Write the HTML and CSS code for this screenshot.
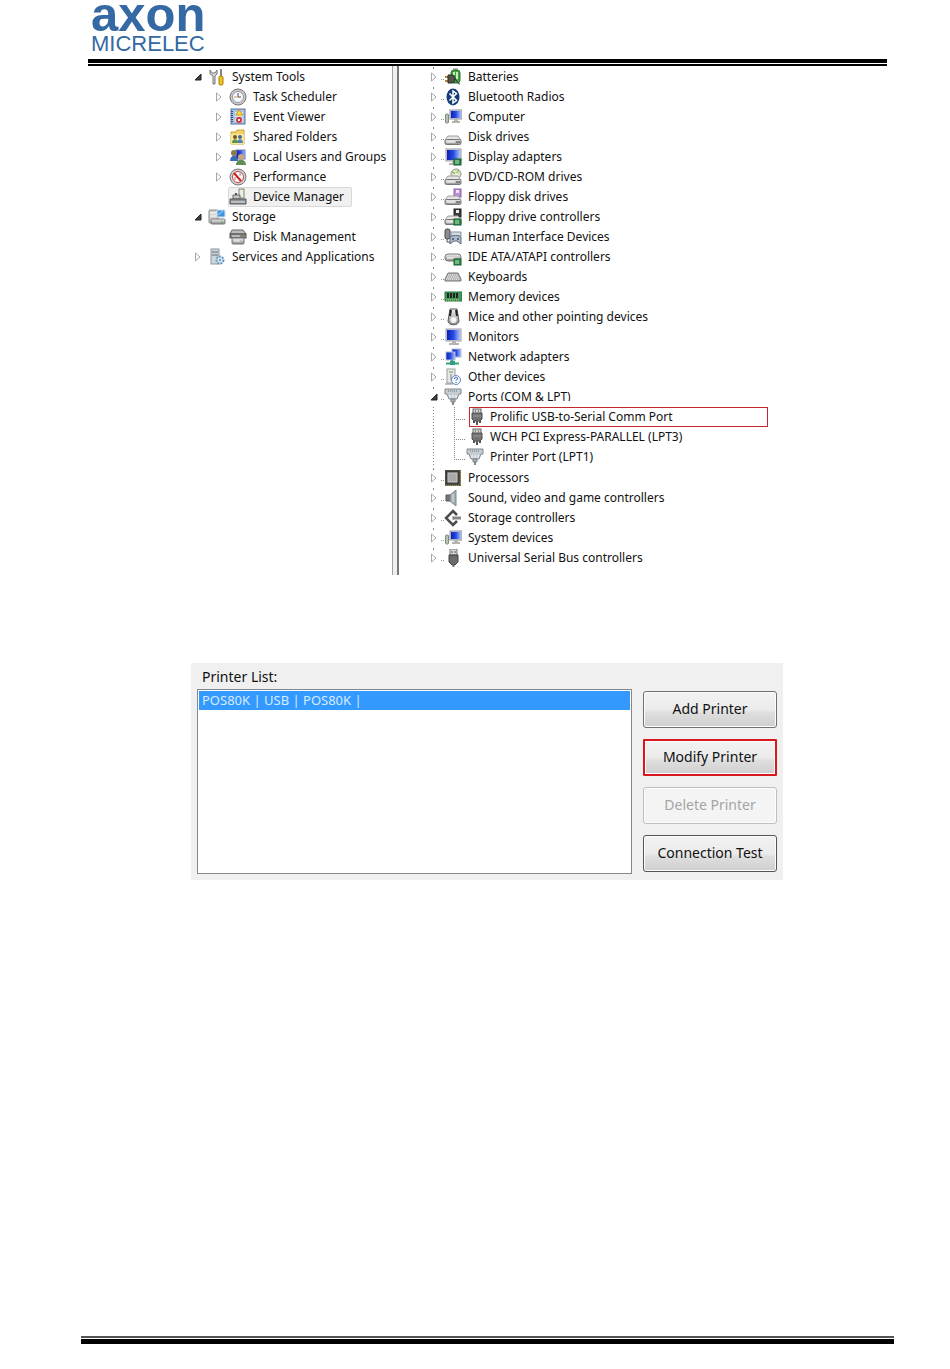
FILE: index.html
```html
<!DOCTYPE html>
<html lang="en">
<head>
    <meta charset="UTF-8">
    <meta name="viewport" content="width=device-width, initial-scale=1.0">
    <title>Axon Micrelec - Printer Setup</title>
    <link rel="stylesheet" href="styles.css">
</head>
<body>

<!-- Icon set -->
<svg class="icon-defs" aria-hidden="true">
    <defs>
        <linearGradient id="metal" x1="0" y1="0" x2="0" y2="1">
            <stop offset="0" stop-color="#f2f2f2"/>
            <stop offset="1" stop-color="#8c8c8c"/>
        </linearGradient>
        <linearGradient id="screen" x1="0" y1="0" x2="1" y2="0">
            <stop offset="0" stop-color="#0a1eb4"/>
            <stop offset="0.5" stop-color="#2a4be0"/>
            <stop offset="1" stop-color="#a9c4ff"/>
        </linearGradient>
    </defs>

    <symbol id="arrow" viewBox="0 0 8 12">
        <path d="M1.5 2v8L6 6z" fill="#fff" stroke="#a6a6a6"/>
    </symbol>
    <symbol id="arrow-open" viewBox="0 0 8 12">
        <path d="M7 3v6H1z" fill="#404040" stroke="#222"/>
    </symbol>

    <symbol id="drive" viewBox="0 0 18 18">
        <path d="M4 8h10l3 4H1z" fill="#e4e4e4" stroke="#a0a0a0"/>
        <rect x="1" y="11.500" width="16" height="5" rx="1.500" fill="url(#metal)" stroke="#777"/>
        <path d="M3 14h8" stroke="#fff"/>
        <path d="M13 13v2M15 13v2" stroke="#444"/>
    </symbol>
    <symbol id="chip-badge" viewBox="0 0 18 18">
        <rect x="10" y="11" width="7" height="6" fill="#2f8a50" stroke="#145c2e"/>
        <path d="M12 12v4M14 12v4" stroke="#b9e0a8"/>
    </symbol>
    <symbol id="monitor" viewBox="0 0 18 18">
        <rect x="2" y="1" width="15" height="12" fill="#dcdce6" stroke="#9a9aaa"/>
        <rect x="3" y="2" width="13" height="10" fill="url(#screen)"/>
        <path d="M8 13h4v2h3v2H5v-2h3z" fill="#b5b5ad"/>
    </symbol>
    <symbol id="computer" viewBox="0 0 18 18">
        <rect x="6" y="2" width="12" height="9" fill="#d5d8e6" stroke="#8c90a8"/>
        <rect x="7" y="3" width="10" height="7" fill="url(#screen)"/>
        <path d="M10 11h4v2h2v2H8v-2h2z" fill="#b5b5ad"/>
        <rect x="1.500" y="6" width="3" height="9" rx="1" fill="#b7c2b4" stroke="#7d8d78"/>
    </symbol>

    <symbol id="tools" viewBox="0 0 18 18">
        <path d="M2 2v4l3 2v8h2V8l2-2V2L7 5H4z" fill="#d5d5d5" stroke="#777"/>
        <path d="M13 1v8" stroke="#888" stroke-width="2"/>
        <rect x="11" y="8" width="4" height="9" rx="1.500" fill="#f2c21d" stroke="#a67c00"/>
    </symbol>
    <symbol id="clock" viewBox="0 0 18 18">
        <circle cx="9" cy="9" r="8" fill="#c9c9c9" stroke="#777"/>
        <circle cx="9" cy="9" r="5.500" fill="#f7fbff" stroke="#99a"/>
        <path d="M9 5v4h3" fill="none" stroke="#456"/>
        <path d="M9 9H5" stroke="#e0a030"/>
    </symbol>
    <symbol id="event" viewBox="0 0 18 18">
        <rect x="2" y="1" width="14" height="15" fill="#a9c2e4" stroke="#5873a0"/>
        <path d="M3 3v12" stroke="#35507f" stroke-width="2" stroke-dasharray="1 1"/>
        <path d="M6 5h8M6 8h8M6 11h8M6 13h8" stroke="#fff"/>
        <path d="M10 2l4 5H7z" fill="#ffe04a" stroke="#d59c00"/>
        <circle cx="10" cy="12" r="3" fill="#d9303c"/>
        <path d="M9 11l2 2M11 11l-2 2" stroke="#fff"/>
    </symbol>
    <symbol id="folder" viewBox="0 0 18 18">
        <path d="M2 4h5l1-2h7v14H2z" fill="#f4d468" stroke="#c9a13a"/>
        <path d="M2 6h13v10H2z" fill="#fae59a"/>
        <circle cx="6" cy="9" r="2" fill="#6d5a20"/>
        <circle cx="11" cy="9" r="2" fill="#456b9c"/>
        <path d="M3 15c0-5 6-5 6 0z" fill="#5d9440"/>
        <path d="M8 15c0-5 6-5 6 0z" fill="#4d83bd"/>
    </symbol>
    <symbol id="users" viewBox="0 0 18 18">
        <rect x="7" y="2" width="9" height="9" fill="url(#screen)" stroke="#7080b0"/>
        <circle cx="5" cy="5" r="3" fill="#8d7a4c"/>
        <path d="M1 13c0-7 8-7 8 0z" fill="#3c69b8"/>
        <circle cx="12" cy="9" r="3" fill="#c9a57b"/>
        <path d="M7 17c0-7 10-7 10 0z" fill="#608d55"/>
    </symbol>
    <symbol id="performance" viewBox="0 0 18 18">
        <circle cx="9" cy="9" r="8" fill="#d2d2d2" stroke="#777"/>
        <circle cx="9" cy="9" r="5.500" fill="#fff" stroke="#cf4040"/>
        <path d="M5 5l7 8" stroke="#cf2020" stroke-width="2"/>
        <path d="M11 5v3M6 9v3" stroke="#888"/>
    </symbol>
    <symbol id="device-manager" viewBox="0 0 18 18">
        <rect x="10" y="1" width="5" height="9" fill="#e9efe4" stroke="#7d8a70"/>
        <path d="M4 7h7v4H4z" fill="#c4c4c4" stroke="#666"/>
        <path d="M1 11h16v5H1z" fill="#8f9599" stroke="#555"/>
        <path d="M2 14h14" stroke="#e4e4e4"/>
        <path d="M7 5v2" stroke="#555" stroke-width="2"/>
    </symbol>
    <symbol id="storage" viewBox="0 0 18 18">
        <rect x="1" y="2" width="9" height="13" rx="1" fill="#d0d0cc" stroke="#888"/>
        <path d="M2 5h7M2 8h7" stroke="#fff"/>
        <rect x="9" y="2" width="8" height="7" rx="1" fill="#3f94dc" stroke="#cfe0ee"/>
        <path d="M10 7l5-4" stroke="#a7dcff"/>
        <rect x="3" y="11" width="14" height="5" rx="1" fill="url(#metal)" stroke="#777"/>
        <path d="M13 14h2" stroke="#4bb04b"/>
    </symbol>
    <symbol id="disk-management" viewBox="0 0 18 18">
        <path d="M3 2h11l3 4H1z" fill="#bdbdb8" stroke="#666"/>
        <rect x="1" y="6" width="16" height="4" fill="#858580" stroke="#555"/>
        <rect x="3" y="10" width="12" height="6" rx="1" fill="url(#metal)" stroke="#777"/>
        <path d="M3 8h8M5 13h6" stroke="#eee"/>
    </symbol>
    <symbol id="services" viewBox="0 0 18 18">
        <rect x="3" y="1" width="8" height="15" fill="#cfd5d9" stroke="#8d969c"/>
        <path d="M4 4h6M4 7h6" stroke="#5a6a76"/>
        <circle cx="12" cy="12" r="3.500" fill="#d7eaf8" stroke="#6597be" stroke-width="2" stroke-dasharray="2 1"/>
        <circle cx="12" cy="12" r="1" fill="#4c80ab"/>
    </symbol>

    <symbol id="battery" viewBox="0 0 18 18">
        <rect x="9" y="0" width="5" height="3" fill="#bbb"/>
        <rect x="7" y="2" width="9" height="13" rx="3" fill="#43a047" stroke="#2a6b2c"/>
        <path d="M10 4v3M13 4v7" stroke="#c5f0b4" stroke-width="2"/>
        <path d="M1 9h3M1 13h3" stroke="#b08a40" stroke-width="2"/>
        <path d="M4 7h4c4 0 4 8 0 8H4z" fill="#57524a" stroke="#2d2a26"/>
        <path d="M10 11c4 0 2 5 6 5" fill="none" stroke="#333"/>
    </symbol>
    <symbol id="bluetooth" viewBox="0 0 18 18">
        <ellipse cx="9" cy="9" rx="6.500" ry="8.500" fill="#143c78"/>
        <path d="M5.500 5.500l7 7L9 15V3l3.500 2.500-7 7" fill="none" stroke="#fff" stroke-width="1.500"/>
    </symbol>
    <symbol id="display" viewBox="0 0 18 18">
        <use href="#monitor"/>
        <use href="#chip-badge"/>
    </symbol>
    <symbol id="dvd" viewBox="0 0 18 18">
        <circle cx="12" cy="6" r="5" fill="#dce4c8" stroke="#8f9a80"/>
        <path d="M12 6l3-4M12 6l-4-2" stroke="#73a94d"/>
        <circle cx="12" cy="6" r="1" fill="#fff"/>
        <use href="#drive"/>
    </symbol>
    <symbol id="floppy" viewBox="0 0 18 18">
        <rect x="10" y="1" width="7" height="8" fill="#b98fd0" stroke="#8a62a8"/>
        <rect x="12" y="2" width="3" height="3" fill="#f0e4f6"/>
        <use href="#drive"/>
    </symbol>
    <symbol id="floppy-controller" viewBox="0 0 18 18">
        <rect x="10" y="1" width="7" height="8" fill="#3c3c3c" stroke="#222"/>
        <rect x="12" y="2" width="3" height="3" fill="#eee"/>
        <use href="#drive"/>
        <use href="#chip-badge"/>
    </symbol>
    <symbol id="hid" viewBox="0 0 18 18">
        <rect x="1" y="1" width="5" height="10" rx="2" fill="#8b8f95" stroke="#444"/>
        <path d="M3 11v3h4" fill="none" stroke="#555"/>
        <path d="M7 4h10v4H7z" fill="#d4dbe3" stroke="#8792a0"/>
        <path d="M6 16V9c2-2 9-2 11 0v7l-4-3h-3z" fill="#aebac8" stroke="#5e6d80"/>
        <circle cx="9" cy="11" r="1" fill="#35527a"/>
        <circle cx="14" cy="11" r="1" fill="#35527a"/>
    </symbol>
    <symbol id="ide" viewBox="0 0 18 18">
        <rect x="1" y="6" width="16" height="7" rx="3" fill="url(#metal)" stroke="#777"/>
        <path d="M3 10h8" stroke="#fff"/>
        <use href="#chip-badge"/>
    </symbol>
    <symbol id="keyboard" viewBox="0 0 18 18">
        <path d="M4 5h10l3 6v2H1v-2z" fill="#b5b5b5" stroke="#777"/>
        <path d="M4 7h10M3 9h12M2 11h14" stroke="#f4f4f4" stroke-dasharray="1 1"/>
    </symbol>
    <symbol id="memory" viewBox="0 0 18 18">
        <path d="M1 4h17v9H1z" fill="#3f9a5c" stroke="#23723c"/>
        <path d="M4 5v5M7 5v5M10 5v5M13 5v5" stroke="#222" stroke-width="2"/>
        <path d="M2 12h14" stroke="#e6d275" stroke-dasharray="1 1"/>
    </symbol>
    <symbol id="mouse" viewBox="0 0 18 18">
        <path d="M6 1h7l2 12c0 5-11 5-11 0z" fill="url(#metal)" stroke="#555"/>
        <path d="M7 2l-1 6M12 2l1 6" stroke="#222" stroke-width="2"/>
        <ellipse cx="9.500" cy="12" rx="3" ry="3" fill="#f4f4f4"/>
    </symbol>
    <symbol id="network" viewBox="0 0 18 18">
        <rect x="8" y="1" width="9" height="8" fill="url(#screen)" stroke="#b0b8d6"/>
        <rect x="2" y="4" width="9" height="8" fill="url(#screen)" stroke="#b0b8d6"/>
        <path d="M8 12v3M2 15.500h13" stroke="#35a865" stroke-width="2"/>
        <rect x="6" y="13" width="5" height="4" fill="#2f9d8a"/>
    </symbol>
    <symbol id="other" viewBox="0 0 18 18">
        <rect x="3" y="1" width="8" height="14" fill="#e6e8e4" stroke="#9aa09a"/>
        <path d="M5 4h4M7 6v6" stroke="#778877"/>
        <path d="M1 16h8" stroke="#888"/>
        <circle cx="12" cy="12" r="4.500" fill="#f3f7ff" stroke="#6b88bb"/>
        <path d="M10.500 11c0-2.500 3.500-2 3 0l-1.500 1.500M12 14v1" fill="none" stroke="#1f4cae"/>
    </symbol>
    <symbol id="port" viewBox="0 0 18 18">
        <path d="M1 1h16v5h-2l-2 5H5L3 6H1z" fill="#c5ccd2" stroke="#808890"/>
        <path d="M4 3h10" stroke="#68727c" stroke-dasharray="1 1"/>
        <path d="M6 7v3M9 7v3M12 7v3" stroke="#fff"/>
        <path d="M7 11h4v3H7z" fill="#a8b0b6" stroke="#7b848c"/>
        <path d="M9 14v3" stroke="#888" stroke-width="2"/>
    </symbol>
    <symbol id="plug" viewBox="0 0 14 18">
        <rect x="3" y="1" width="8" height="5" fill="#d5d5d5" stroke="#666"/>
        <path d="M5 3h1M8 3h1" stroke="#333"/>
        <path d="M2 5h10v6l-2 2H4l-2-2z" fill="#727272" stroke="#505050"/>
        <path d="M3 8h8" stroke="#999"/>
        <path d="M4 13v2M7 13v4M10 13v2" stroke="#555" stroke-width="2"/>
    </symbol>
    <symbol id="cpu" viewBox="0 0 18 18">
        <rect x="1" y="1" width="16" height="16" fill="#6b664e"/>
        <rect x="2" y="2" width="13" height="13" fill="#484848" stroke="#333"/>
        <rect x="4" y="4" width="9" height="9" fill="#a9a9a9" stroke="#c6c6c6"/>
        <path d="M16.500 2v14M2 16.500h14" stroke="#a8924a" stroke-dasharray="1 1"/>
    </symbol>
    <symbol id="sound" viewBox="0 0 18 18">
        <path d="M2 6h4v6H2z" fill="#777" stroke="#555"/>
        <path d="M6 6l6-5v16l-6-5z" fill="#a2adb4" stroke="#7b868d"/>
        <path d="M9 5v8" stroke="#e2eaf0"/>
    </symbol>
    <symbol id="storage-controller" viewBox="0 0 18 18">
        <path d="M13 6L9 2 2 9l7 7 4-4" fill="none" stroke="#4c4c4c" stroke-width="2.500"/>
        <path d="M8 9h9" stroke="#868686" stroke-width="3"/>
        <path d="M10 7l-2 2 2 2" fill="none" stroke="#aaa"/>
    </symbol>
    <symbol id="usb" viewBox="0 0 18 18">
        <rect x="6" y="0" width="7" height="6" fill="#d8d8d8" stroke="#777"/>
        <path d="M8 2v2M11 2v2" stroke="#555"/>
        <path d="M5 6h9v7l-3 3H8l-3-3z" fill="#6b6b6b" stroke="#444"/>
        <path d="M9.500 16v2" stroke="#777" stroke-width="2"/>
    </symbol>
</svg>

<header class="page-header">
    <div class="logo">
        <span class="logo-name">axon</span>
        <span class="logo-sub">MICRELEC</span>
    </div>
</header>

<main>
    <!-- Computer management trees -->
    <section class="management">
        <nav class="console">
            <ul class="tree">
                <li>
                    <div class="node"><button class="toggle" aria-label="Collapse"><svg><use href="#arrow-open"/></svg></button><svg class="icon"><use href="#tools"/></svg><span>System Tools</span></div>
                    <ul>
                        <li><div class="node"><button class="toggle" aria-label="Expand"><svg><use href="#arrow"/></svg></button><svg class="icon"><use href="#clock"/></svg><span>Task Scheduler</span></div></li>
                        <li><div class="node"><button class="toggle" aria-label="Expand"><svg><use href="#arrow"/></svg></button><svg class="icon"><use href="#event"/></svg><span>Event Viewer</span></div></li>
                        <li><div class="node"><button class="toggle" aria-label="Expand"><svg><use href="#arrow"/></svg></button><svg class="icon"><use href="#folder"/></svg><span>Shared Folders</span></div></li>
                        <li><div class="node"><button class="toggle" aria-label="Expand"><svg><use href="#arrow"/></svg></button><svg class="icon"><use href="#users"/></svg><span>Local Users and Groups</span></div></li>
                        <li><div class="node"><button class="toggle" aria-label="Expand"><svg><use href="#arrow"/></svg></button><svg class="icon"><use href="#performance"/></svg><span>Performance</span></div></li>
                        <li><div class="node leaf"><div class="selected"><svg class="icon"><use href="#device-manager"/></svg><span>Device Manager</span></div></div></li>
                    </ul>
                </li>
                <li>
                    <div class="node"><button class="toggle" aria-label="Collapse"><svg><use href="#arrow-open"/></svg></button><svg class="icon"><use href="#storage"/></svg><span>Storage</span></div>
                    <ul>
                        <li><div class="node leaf"><svg class="icon"><use href="#disk-management"/></svg><span>Disk Management</span></div></li>
                    </ul>
                </li>
                <li><div class="node"><button class="toggle" aria-label="Expand"><svg><use href="#arrow"/></svg></button><svg class="icon"><use href="#services"/></svg><span>Services and Applications</span></div></li>
            </ul>
        </nav>
        <div class="splitter"></div>
        <div class="devices">
            <ul class="tree dotted">
                <li><div class="node"><button class="toggle" aria-label="Expand"><svg><use href="#arrow"/></svg></button><svg class="icon"><use href="#battery"/></svg><span>Batteries</span></div></li>
                <li><div class="node"><button class="toggle" aria-label="Expand"><svg><use href="#arrow"/></svg></button><svg class="icon"><use href="#bluetooth"/></svg><span>Bluetooth Radios</span></div></li>
                <li><div class="node"><button class="toggle" aria-label="Expand"><svg><use href="#arrow"/></svg></button><svg class="icon"><use href="#computer"/></svg><span>Computer</span></div></li>
                <li><div class="node"><button class="toggle" aria-label="Expand"><svg><use href="#arrow"/></svg></button><svg class="icon"><use href="#drive"/></svg><span>Disk drives</span></div></li>
                <li><div class="node"><button class="toggle" aria-label="Expand"><svg><use href="#arrow"/></svg></button><svg class="icon"><use href="#display"/></svg><span>Display adapters</span></div></li>
                <li><div class="node"><button class="toggle" aria-label="Expand"><svg><use href="#arrow"/></svg></button><svg class="icon"><use href="#dvd"/></svg><span>DVD/CD-ROM drives</span></div></li>
                <li><div class="node"><button class="toggle" aria-label="Expand"><svg><use href="#arrow"/></svg></button><svg class="icon"><use href="#floppy"/></svg><span>Floppy disk drives</span></div></li>
                <li><div class="node"><button class="toggle" aria-label="Expand"><svg><use href="#arrow"/></svg></button><svg class="icon"><use href="#floppy-controller"/></svg><span>Floppy drive controllers</span></div></li>
                <li><div class="node"><button class="toggle" aria-label="Expand"><svg><use href="#arrow"/></svg></button><svg class="icon"><use href="#hid"/></svg><span>Human Interface Devices</span></div></li>
                <li><div class="node"><button class="toggle" aria-label="Expand"><svg><use href="#arrow"/></svg></button><svg class="icon"><use href="#ide"/></svg><span>IDE ATA/ATAPI controllers</span></div></li>
                <li><div class="node"><button class="toggle" aria-label="Expand"><svg><use href="#arrow"/></svg></button><svg class="icon"><use href="#keyboard"/></svg><span>Keyboards</span></div></li>
                <li><div class="node"><button class="toggle" aria-label="Expand"><svg><use href="#arrow"/></svg></button><svg class="icon"><use href="#memory"/></svg><span>Memory devices</span></div></li>
                <li><div class="node"><button class="toggle" aria-label="Expand"><svg><use href="#arrow"/></svg></button><svg class="icon"><use href="#mouse"/></svg><span>Mice and other pointing devices</span></div></li>
                <li><div class="node"><button class="toggle" aria-label="Expand"><svg><use href="#arrow"/></svg></button><svg class="icon"><use href="#monitor"/></svg><span>Monitors</span></div></li>
                <li><div class="node"><button class="toggle" aria-label="Expand"><svg><use href="#arrow"/></svg></button><svg class="icon"><use href="#network"/></svg><span>Network adapters</span></div></li>
                <li><div class="node"><button class="toggle" aria-label="Expand"><svg><use href="#arrow"/></svg></button><svg class="icon"><use href="#other"/></svg><span>Other devices</span></div></li>
                <li>
                    <div class="node"><button class="toggle" aria-label="Collapse"><svg><use href="#arrow-open"/></svg></button><svg class="icon"><use href="#port"/></svg><span class="cut">Ports (COM &amp; LPT)</span></div>
                    <ul class="ports">
                        <li><div class="port marked"><svg class="plug"><use href="#plug"/></svg><span>Prolific USB-to-Serial Comm Port</span></div></li>
                        <li><div class="port"><svg class="plug"><use href="#plug"/></svg><span>WCH PCI Express-PARALLEL (LPT3)</span></div></li>
                        <li><div class="port wide"><svg class="icon"><use href="#port"/></svg><span>Printer Port (LPT1)</span></div></li>
                    </ul>
                </li>
                <li><div class="node"><button class="toggle" aria-label="Expand"><svg><use href="#arrow"/></svg></button><svg class="icon"><use href="#cpu"/></svg><span>Processors</span></div></li>
                <li><div class="node"><button class="toggle" aria-label="Expand"><svg><use href="#arrow"/></svg></button><svg class="icon"><use href="#sound"/></svg><span>Sound, video and game controllers</span></div></li>
                <li><div class="node"><button class="toggle" aria-label="Expand"><svg><use href="#arrow"/></svg></button><svg class="icon"><use href="#storage-controller"/></svg><span>Storage controllers</span></div></li>
                <li><div class="node"><button class="toggle" aria-label="Expand"><svg><use href="#arrow"/></svg></button><svg class="icon"><use href="#computer"/></svg><span>System devices</span></div></li>
                <li><div class="node"><button class="toggle" aria-label="Expand"><svg><use href="#arrow"/></svg></button><svg class="icon"><use href="#usb"/></svg><span>Universal Serial Bus controllers</span></div></li>
            </ul>
        </div>
    </section>

    <!-- Printer list -->
    <form class="printers">
        <div class="printer-list">
            <label for="printerList">Printer List:</label>
            <select id="printerList" size="8">
                <option selected>POS80K | USB | POS80K |</option>
            </select>
        </div>
        <div class="actions">
            <button type="button">Add Printer</button>
            <button type="button" class="highlight">Modify Printer</button>
            <button type="button" disabled>Delete Printer</button>
            <button type="button" class="default">Connection Test</button>
        </div>
    </form>
</main>

<footer class="page-footer"></footer>

</body>
</html>
```

FILE: styles.css
```css
body {
    font-family: 'Noto Sans', 'Open Sans', sans-serif;
    font-size: 12px;
    line-height: 20px;
    color: #111;
    background-color: #fff;
    margin: 0;
    min-height: 100vh;
    display: flex;
    flex-direction: column;
}

ul {
    list-style: none;
    margin: 0;
    padding: 0;
}

.icon-defs {
    position: absolute;
    width: 0;
    height: 0;
}

/* Header */
.page-header {
    margin: 0 63px 0 88px;
    border-bottom: 2px solid #000;
}

.logo {
    box-sizing: border-box;
    height: 63px;
    margin-bottom: 1px;
    padding-left: 3px;
    border-bottom: 4px solid #000;
    font-family: 'Liberation Sans', Arial, sans-serif;
    color: #3469a4;
}

.logo-name {
    display: block;
    font-weight: bold;
    font-size: 49px;
    line-height: 28px;
}

.logo-sub {
    display: block;
    margin-top: 8px;
    font-size: 22px;
    line-height: 16px;
}

main {
    padding: 0 167px 0 191px;
}

/* Trees */
.management {
    display: flex;
}

.console {
    flex: 0 0 198px;
    padding: 1px 0 0 3px;
    white-space: nowrap;
}

.splitter {
    flex: 0 0 4px;
    border-left: 1px solid #a0a0a0;
    border-right: 2px solid #777;
    background-color: #f0f0f0;
}

.devices {
    flex: 1;
    padding: 1px 15px 7px 31px;
    white-space: nowrap;
}

.console .tree ul {
    padding-left: 21px;
}

.node {
    display: flex;
    align-items: center;
    height: 20px;
}

.leaf {
    padding-left: 14px;
}

.toggle {
    width: 8px;
    height: 12px;
    margin: 0 6px 0 0;
    padding: 0;
    border: none;
    background: none;
    cursor: pointer;
}

.toggle svg {
    display: block;
    width: 8px;
    height: 12px;
}

.icon {
    flex: none;
    width: 18px;
    height: 18px;
    margin-right: 6px;
}

.selected {
    display: flex;
    align-items: center;
    height: 18px;
    padding-right: 7px;
    border: 1px solid #d9d9d9;
    border-radius: 2px;
    background-color: #f0f0f0;
    margin-left: -1px;
}

.dotted .node {
    background: linear-gradient(#888, #888) 3px 0 / 1px 2px no-repeat,
                repeating-linear-gradient(to right, #999 0 1px, transparent 1px 2px) 11px 12px / 3px 1px no-repeat;
}

.cut {
    clip-path: inset(0 0 6px 0);
}

/* Ports branch */
.ports {
    padding-left: 24px;
    margin-bottom: 1px;
    background: repeating-linear-gradient(#888 0 1px, transparent 1px 3px) 3px 0 / 1px 100% no-repeat;
}

.ports li {
    padding-left: 15px;
    background: repeating-linear-gradient(#888 0 1px, transparent 1px 2px) 0 0 / 1px 100% no-repeat,
                repeating-linear-gradient(to right, #888 0 1px, transparent 1px 2px) 0 12px / 12px 1px no-repeat;
}

.ports li:last-child {
    background-size: 1px 12px, 12px 1px;
}

.port {
    display: flex;
    align-items: center;
    height: 18px;
    border: 1px solid transparent;
}

.marked {
    border-color: #c4262e;
}

.plug {
    flex: none;
    width: 14px;
    height: 18px;
    margin-right: 6px;
}

.wide {
    margin-left: -4px;
}

/* Printer list */
.printers {
    display: flex;
    gap: 11px;
    margin-top: 88px;
    padding: 4px 6px 6px;
    background-color: #f0f0f0;
    font-size: 14px;
}

.printer-list {
    flex: 1;
    display: flex;
    flex-direction: column;
}

.printer-list label {
    padding-left: 5px;
    height: 22px;
}

.printer-list select {
    flex: 1;
    padding: 1px;
    border: 1px solid #828790;
    border-radius: 0;
    background-color: #fff;
    font-family: inherit;
    font-size: 13px;
    overflow: hidden;
    outline: none;
}

.printer-list option {
    padding: 0 3px;
    min-height: 19px;
    line-height: 19px;
}

.printer-list option:checked {
    background: #3399ff linear-gradient(#3399ff, #3399ff);
    color: #d4ecff;
}

.actions {
    flex: 0 0 134px;
    display: flex;
    flex-direction: column;
    gap: 11px;
    padding: 24px 0 2px;
}

.actions button {
    height: 37px;
    padding: 0 0 2px;
    border: 1px solid #707070;
    border-radius: 3px;
    background: linear-gradient(#f2f2f2, #ebebeb 50%, #dedede 60%, #cfcfcf);
    box-shadow: inset 0 0 0 1px #fcfcfc;
    font-family: inherit;
    font-size: 14px;
    color: #111;
    cursor: pointer;
}

.actions .highlight {
    border: 2px solid #d8181c;
    border-radius: 1px;
}

.actions .default {
    border-color: #555;
}

.actions button:disabled {
    border-color: #bfbfbf;
    background: #f4f4f4;
    color: #a5a5a5;
    cursor: default;
}

/* Footer */
.page-footer {
    margin: auto 56px 25px 81px;
    height: 1px;
    border-top: 2px solid #555;
    border-bottom: 5px solid #000;
}
```
